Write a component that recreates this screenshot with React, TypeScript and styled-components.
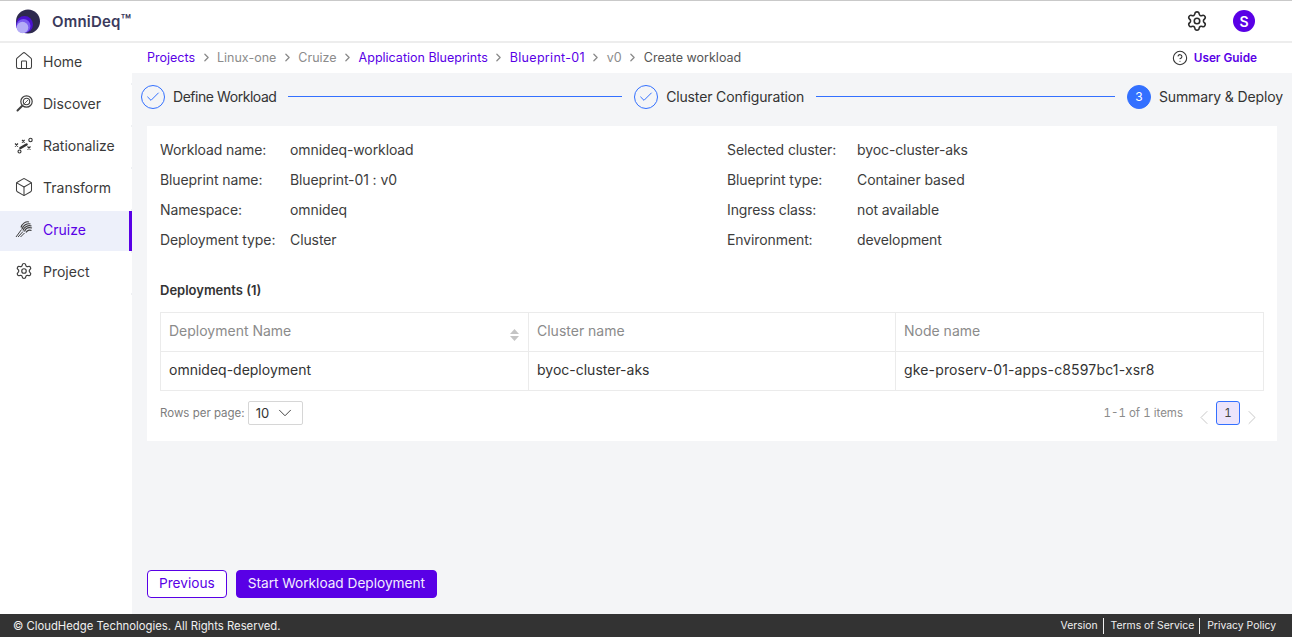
import React from 'react';
import styled, { createGlobalStyle } from 'styled-components';
import { Home, Box, Settings, ChevronRight, ChevronLeft, ChevronDown, Check, CircleHelp } from 'lucide-react';

const GlobalStyle = createGlobalStyle`
  html, body {
    margin: 0;
    padding: 0;
    height: 100%;
  }
  body {
    font-family: 'Inter', 'Liberation Sans', sans-serif;
    color: #2b2b2b;
    overflow: hidden;
  }
  * {
    box-sizing: border-box;
  }
`;

const Page = styled.div`
  width: 1292px;
  height: 637px;
  display: flex;
  flex-direction: column;
  background: #f4f5f7;
`;

const Header = styled.header`
  height: 43px;
  flex: none;
  display: flex;
  align-items: center;
  justify-content: space-between;
  background: #fff;
  border-top: 1px solid #c9c9c9;
  border-bottom: 2px solid #ededed;
  padding: 0 37px 0 16px;
`;

const Brand = styled.div`
  display: flex;
  align-items: center;
  gap: 12px;
  font-size: 15px;
  font-weight: 600;
  letter-spacing: 0.2px;
  color: #3b3a5c;
`;

const Tm = styled.span`
  font-size: 17px;
  line-height: 15px;
  letter-spacing: 0;
`;

const HeaderRight = styled.div`
  display: flex;
  align-items: center;
  gap: 25px;
`;

const Avatar = styled.div`
  width: 22px;
  height: 22px;
  border-radius: 50%;
  background: #5900e6;
  color: #fff;
  font-size: 14px;
  font-weight: 600;
  display: flex;
  align-items: center;
  justify-content: center;
`;

const Body = styled.div`
  flex: 1;
  display: flex;
  min-height: 0;
`;

const Sidebar = styled.nav`
  width: 132px;
  flex: none;
  background: #fff;
`;

const NavList = styled.div`
  display: flex;
  flex-direction: column;
  gap: 2px;
  padding-bottom: 2px;
  border-right: 1px solid #eef0f3;
`;

const NavItem = styled.div<{ $active?: boolean }>`
  height: 40px;
  width: 132px;
  display: flex;
  align-items: center;
  gap: 10px;
  padding: 0 0 4px 15px;
  font-size: 14px;
  color: ${(p) => (p.$active ? '#5900e6' : '#3a3a3a')};
  background: ${(p) => (p.$active ? '#edf0fa' : '#fff')};
  border-right: ${(p) => (p.$active ? '3px solid #5900e6' : 'none')};
`;

const NavIcon = styled.span`
  width: 18px;
  height: 20px;
  flex: none;
  display: flex;
  align-items: center;
  justify-content: center;
  color: #3f3f3f;
  svg {
    flex: none;
  }
`;

const Main = styled.main`
  flex: 1;
  min-width: 0;
  display: flex;
  flex-direction: column;
`;

const CrumbBar = styled.div`
  height: 30px;
  flex: none;
  background: #fff;
  display: flex;
  align-items: center;
  justify-content: space-between;
  padding: 0 35px 2px 15px;
  font-size: 12.5px;
`;

const Crumbs = styled.div`
  display: flex;
  align-items: center;
  gap: 4.5px;
  svg {
    color: #8a8a8a;
  }
`;

const Crumb = styled.span<{ $kind?: 'link' | 'muted' | 'plain'; $wide?: boolean }>`
  color: ${(p) => (p.$kind === 'link' ? '#5900e6' : p.$kind === 'muted' ? '#8c8c8c' : '#555')};
  letter-spacing: ${(p) => (p.$wide ? '0.3px' : 'normal')};
`;

const GuideLink = styled.div`
  display: flex;
  align-items: center;
  gap: 6px;
  margin-top: 1px;
  color: #5900e6;
  font-weight: 600;
  font-size: 11.8px;
  svg {
    color: #333;
  }
`;

const Stepper = styled.div`
  height: 53px;
  flex: none;
  display: flex;
  align-items: center;
  padding: 0 9px 6px;
`;

const Step = styled.div<{ $spacing: number }>`
  display: flex;
  align-items: center;
  gap: 8px;
  font-size: 14px;
  letter-spacing: ${(p) => p.$spacing}px;
  color: #333;
  white-space: nowrap;
`;

const StepCircle = styled.div<{ $filled?: boolean }>`
  width: 24px;
  height: 24px;
  border-radius: 50%;
  border: 1px solid #3370ff;
  background: ${(p) => (p.$filled ? '#3370ff' : 'transparent')};
  color: ${(p) => (p.$filled ? '#fff' : '#3370ff')};
  font-size: 12px;
  display: flex;
  align-items: center;
  justify-content: center;
`;

const StepLine = styled.div<{ $grow: number }>`
  flex: ${(p) => p.$grow};
  height: 1px;
  background: #3370ff;
  margin: 0 12px;
`;

const Card = styled.section`
  margin: 0 15px;
  height: 315px;
  flex: none;
  background: #fff;
  padding: 8px 13px 0;
`;

const Details = styled.div`
  display: grid;
  grid-template-columns: 567px 1fr;
`;

const DetailRow = styled.div`
  height: 30px;
  display: flex;
  align-items: center;
  font-size: 14px;
  letter-spacing: -0.1px;
  color: #3d3d3d;
`;

const DetailLabel = styled.span`
  width: 130px;
  flex: none;
`;

const SectionTitle = styled.div`
  margin-top: 27px;
  font-size: 13px;
  font-weight: 600;
  color: #333;
  height: 18px;
  display: flex;
  align-items: center;
`;

const Table = styled.div`
  margin-top: 13px;
  border: 1px solid #ebebeb;
  display: grid;
  grid-template-columns: 368px 367px 1fr;
`;

const Cell = styled.div<{ $head?: boolean; $last?: boolean; $wide?: boolean }>`
  height: ${(p) => (p.$head ? '39px' : '38px')};
  padding: 0 8px 4px;
  display: flex;
  align-items: center;
  justify-content: space-between;
  font-size: 14px;
  letter-spacing: ${(p) => (p.$wide ? '0.15px' : 'normal')};
  color: ${(p) => (p.$head ? '#8b8b8b' : '#333')};
  border-right: ${(p) => (p.$last ? 'none' : '1px solid #ebebeb')};
  border-bottom: ${(p) => (p.$head ? '1px solid #ebebeb' : 'none')};
`;

const SortIcon = styled.svg`
  margin: 10px 1px 0 0;
`;

const Pager = styled.div`
  margin-top: 10px;
  display: flex;
  align-items: center;
  justify-content: space-between;
`;

const RowsPer = styled.div`
  display: flex;
  align-items: center;
  gap: 3px;
  font-size: 11.5px;
  color: #7d7d7d;
`;

const RowsSelect = styled.div`
  width: 55px;
  height: 24px;
  border: 1px solid #d6d6d6;
  border-radius: 2px;
  display: flex;
  align-items: center;
  gap: 5px;
  padding-left: 7px;
  font-size: 13px;
  color: #333;
`;

const PagerRight = styled.div`
  display: flex;
  align-items: center;
  font-size: 11.5px;
  font-variant-numeric: tabular-nums;
  color: #8b8b8b;
  svg {
    color: #c9c9c9;
    transform: translateY(4.5px);
  }
`;

const PageCount = styled.span`
  margin-right: 9px;
`;

const PageBox = styled.div`
  width: 24px;
  height: 24px;
  border: 1px solid #3370ff;
  border-radius: 3px;
  background: #ece4fb;
  color: #444;
  font-size: 11.5px;
  display: flex;
  align-items: center;
  justify-content: center;
`;

const Actions = styled.div`
  margin-top: auto;
  padding: 0 15px 16px;
  display: flex;
  gap: 9px;
`;

const Button = styled.button<{ $primary?: boolean }>`
  height: 28px;
  padding: 0 11px 3px;
  border-radius: 4px;
  border: 1px solid #5900e6;
  background: ${(p) => (p.$primary ? '#5900e6' : '#fff')};
  color: ${(p) => (p.$primary ? '#f2ecff' : '#5900e6')};
  font-family: inherit;
  font-size: 13.65px;
`;

const Footer = styled.footer`
  height: 23px;
  flex: none;
  background: #333;
  color: #f0f0f0;
  font-size: 11.3px;
  display: flex;
  align-items: center;
  justify-content: space-between;
  padding: 0 11px 0 13px;
`;

const FooterLinks = styled.div`
  display: flex;
  align-items: center;
  font-size: 10.4px;
`;

const FooterLink = styled.span<{ $first?: boolean }>`
  padding: 0 5px 0 7px;
  border-left: ${(p) => (p.$first ? 'none' : '1px solid #f0f0f0')};
  line-height: 16px;
`;

const Logo = () => (
  <svg width="24" height="25" viewBox="0 0 24 25">
    <circle cx="12" cy="12.5" r="12" fill="#2e2a4f" />
    <circle cx="8.5" cy="15.5" r="8.5" fill="#4a12d0" />
    <circle cx="7.5" cy="17" r="7" fill="#7a5cf0" />
    <circle cx="6.5" cy="18.5" r="5.8" fill="#b4acf7" />
  </svg>
);

const DiscoverIcon = () => (
  <svg width="17" height="17" viewBox="0 0 17 17" fill="none" stroke="#3f3f3f">
    <circle cx="10.5" cy="6.5" r="5.7" strokeWidth="1.2" />
    <circle cx="10.5" cy="6.5" r="3.2" strokeWidth="1.1" />
    <path d="M7.5 9.5l1.5-1M9 8l3-3" strokeWidth="0.8" />
    <path d="M6 11L1.5 15.5" strokeWidth="2" strokeLinecap="round" />
  </svg>
);

const RationalizeIcon = () => (
  <svg width="20" height="17" viewBox="0 0 20 17" fill="none" stroke="#333" strokeWidth="1.1">
    <path d="M1 6.5l3 3M4 6.5l-3 3M8 3l2.6 2.6M10.6 3L8 5.6M13.5 9.5l3 3M16.5 9.5l-3 3" />
    <path d="M6.5 11l6-3.5" strokeWidth="2.6" strokeLinecap="round" />
    <circle cx="16.5" cy="3" r="1.7" />
    <circle cx="5.5" cy="14.5" r="1.5" />
  </svg>
);

const CruizeIcon = () => (
  <svg width="18" height="18" viewBox="0 0 18 18" fill="none" stroke="#3f3f3f" strokeWidth="1.2">
    <path d="M6 7.5C7 3.5 11 1 14 2" />
    <path d="M7 9C8 5.5 12 3 15.5 4" />
    <path d="M8 10.5C9 7 13 4.8 16.5 6" />
    <path d="M9.5 11.5C10.5 8.5 13.5 7 17 8" />
    <path d="M11 12.5C12 10.5 14.5 9.5 16.5 10.5" />
    <path d="M1 17L6.5 9.5M3 17l5-5.5M5.5 17l4-4" strokeWidth="1" />
  </svg>
);

const SortArrows = () => (
  <SortIcon width="9" height="12" viewBox="0 0 9 12" fill="#c4c4c4">
    <path d="M4.5 0L9 5H0z" />
    <path d="M4.5 12L0 7h9z" />
  </SortIcon>
);

const navItems = [
  { label: 'Home', icon: <Home size={20} strokeWidth={1.25} /> },
  { label: 'Discover', icon: <DiscoverIcon /> },
  { label: 'Rationalize', icon: <RationalizeIcon /> },
  { label: 'Transform', icon: <Box size={20} strokeWidth={1.25} /> },
  { label: 'Cruize', icon: <CruizeIcon />, active: true },
  { label: 'Project', icon: <Settings size={18} strokeWidth={1.6} /> },
];

const details = [
  ['Workload name:', 'omnideq-workload'],
  ['Selected cluster:', 'byoc-cluster-aks'],
  ['Blueprint name:', 'Blueprint-01 : v0'],
  ['Blueprint type:', 'Container based'],
  ['Namespace:', 'omnideq'],
  ['Ingress class:', 'not available'],
  ['Deployment type:', 'Cluster'],
  ['Environment:', 'development'],
];

const crumbs: { label: string; kind: 'link' | 'muted' | 'plain'; wide?: boolean }[] = [
  { label: 'Projects', kind: 'link' },
  { label: 'Linux-one', kind: 'muted' },
  { label: 'Cruize', kind: 'muted' },
  { label: 'Application Blueprints', kind: 'link' },
  { label: 'Blueprint-01', kind: 'link', wide: true },
  { label: 'v0', kind: 'muted' },
  { label: 'Create workload', kind: 'plain' },
];

const App = () => {
  return (
    <Page>
      <GlobalStyle />
      <Header>
        <Brand>
          <Logo />
          <span>
            OmniDeq<Tm>™</Tm>
          </span>
        </Brand>
        <HeaderRight>
          <Settings size={22} strokeWidth={1.7} color="#2b2b2b" />
          <Avatar>S</Avatar>
        </HeaderRight>
      </Header>
      <Body>
        <Sidebar>
          <NavList>
            {navItems.map(({ label, icon, active }) => (
              <NavItem key={label} $active={active}>
                <NavIcon>{icon}</NavIcon>
                {label}
              </NavItem>
            ))}
          </NavList>
        </Sidebar>
        <Main>
          <CrumbBar>
            <Crumbs>
              {crumbs.map(({ label, kind, wide }, idx) => (
                <React.Fragment key={label}>
                  {idx > 0 && <ChevronRight size={13} strokeWidth={2.4} />}
                  <Crumb $kind={kind} $wide={wide}>
                    {label}
                  </Crumb>
                </React.Fragment>
              ))}
            </Crumbs>
            <GuideLink>
              <CircleHelp size={16} strokeWidth={1.6} />
              User Guide
            </GuideLink>
          </CrumbBar>
          <Stepper>
            <Step $spacing={-0.45}>
              <StepCircle>
                <Check size={16} strokeWidth={1.5} />
              </StepCircle>
              Define Workload
            </Step>
            <StepLine $grow={334} />
            <Step $spacing={-0.15}>
              <StepCircle>
                <Check size={16} strokeWidth={1.5} />
              </StepCircle>
              Cluster Configuration
            </Step>
            <StepLine $grow={299} />
            <Step $spacing={-0.13}>
              <StepCircle $filled>3</StepCircle>
              Summary &amp; Deploy
            </Step>
          </Stepper>
          <Card>
            <Details>
              {details.map(([label, value]) => (
                <DetailRow key={label}>
                  <DetailLabel>{label}</DetailLabel>
                  {value}
                </DetailRow>
              ))}
            </Details>
            <SectionTitle>Deployments (1)</SectionTitle>
            <Table>
              <Cell $head>
                Deployment Name
                <SortArrows />
              </Cell>
              <Cell $head>Cluster name</Cell>
              <Cell $head $last>
                Node name
              </Cell>
              <Cell>omnideq-deployment</Cell>
              <Cell>byoc-cluster-aks</Cell>
              <Cell $last $wide>
                gke-proserv-01-apps-c8597bc1-xsr8
              </Cell>
            </Table>
            <Pager>
              <RowsPer>
                Rows per page:
                <RowsSelect>
                  10
                  <ChevronDown size={22} strokeWidth={1} />
                </RowsSelect>
              </RowsPer>
              <PagerRight>
                <PageCount>1-1 of 1 items</PageCount>
                <ChevronLeft size={24} strokeWidth={1} />
                <PageBox>1</PageBox>
                <ChevronRight size={24} strokeWidth={1} />
              </PagerRight>
            </Pager>
          </Card>
          <Actions>
            <Button>Previous</Button>
            <Button $primary>Start Workload Deployment</Button>
          </Actions>
        </Main>
      </Body>
      <Footer>
        <span>© CloudHedge Technologies. All Rights Reserved.</span>
        <FooterLinks>
          <FooterLink $first>Version</FooterLink>
          <FooterLink>Terms of Service</FooterLink>
          <FooterLink>Privacy Policy</FooterLink>
        </FooterLinks>
      </Footer>
    </Page>
  );
};

export default App;
